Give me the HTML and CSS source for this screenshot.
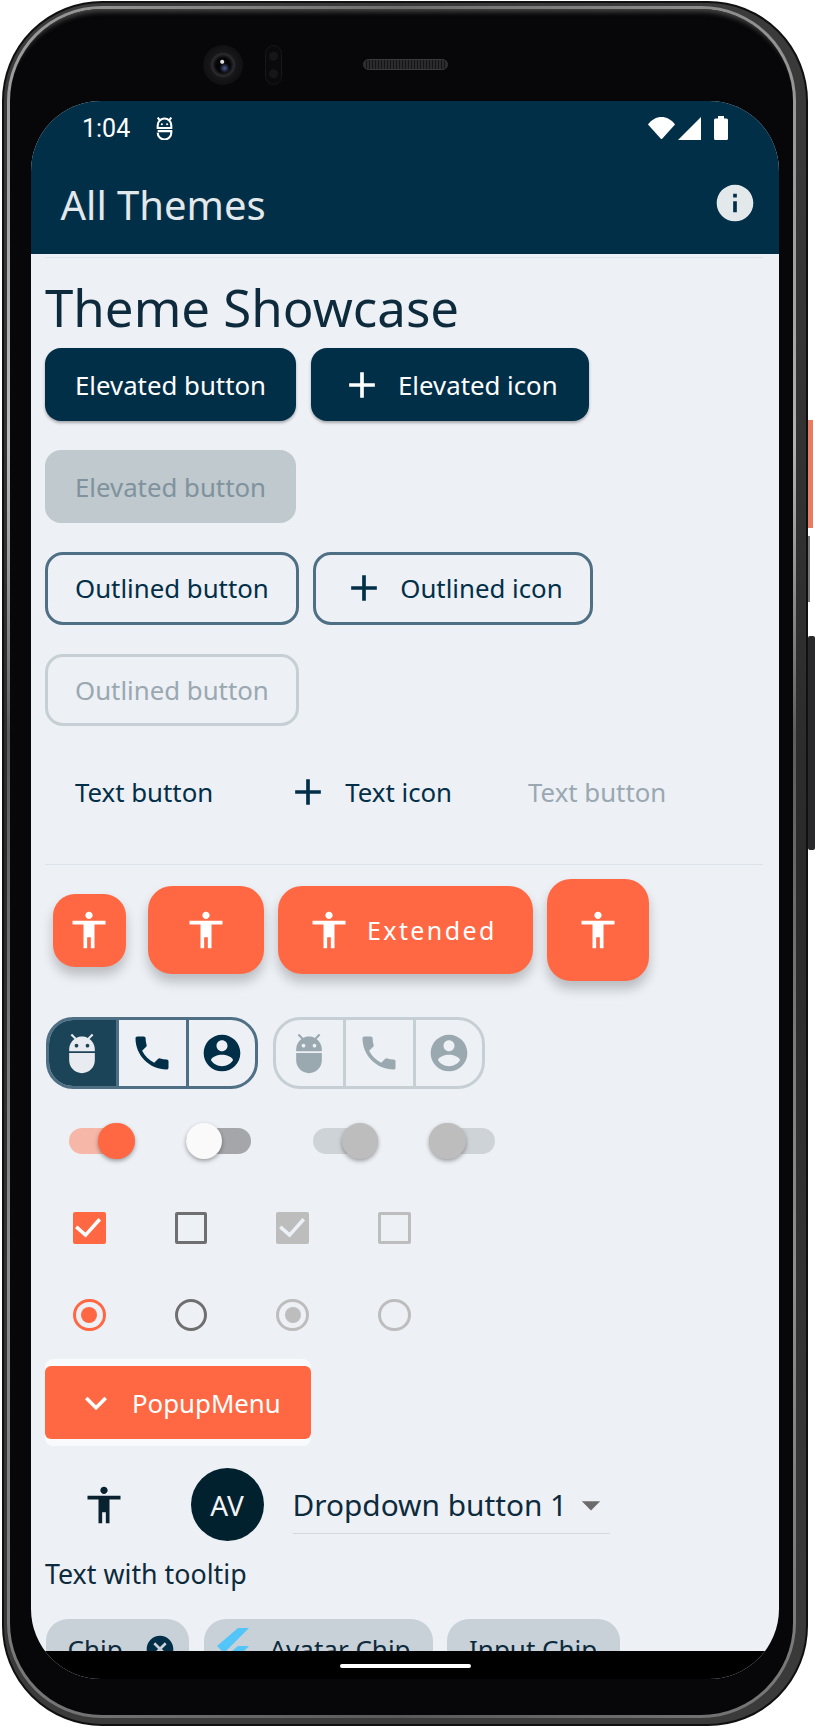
FILE: index.html
```html
<!DOCTYPE html>
<html lang="en">
<head>
    <meta charset="UTF-8">
    <meta name="viewport" content="width=device-width, initial-scale=1.0">
    <title>All Themes</title>
    <link rel="stylesheet" href="styles.css">
</head>
<body>
    <svg class="sprite">
        <symbol id="i-person" viewBox="0 0 24 24"><path d="M12 2c1.1 0 2 .9 2 2s-.9 2-2 2-2-.9-2-2 .9-2 2-2zm9 7h-6v13h-2v-6h-2v6H9V9H3V7h18v2z"/></symbol>
        <symbol id="i-add" viewBox="0 0 24 24"><path d="M19 13h-6v6h-2v-6H5v-2h6V5h2v6h6v2z"/></symbol>
        <symbol id="i-adb" viewBox="0 0 24 24"><path d="M5 16c0 3.87 3.13 7 7 7s7-3.13 7-7v-4H5v4zM16.12 4.37l2.1-2.1-.82-.83-2.3 2.31C14.16 3.28 13.12 3 12 3s-2.16.28-3.09.75L6.6 1.44l-.82.83 2.1 2.1C6.14 5.64 5 7.68 5 10v1h14v-1c0-2.32-1.14-4.36-2.88-5.63zM9 9c-.55 0-1-.45-1-1s.45-1 1-1 1 .45 1 1-.45 1-1 1zm6 0c-.55 0-1-.45-1-1s.45-1 1-1 1 .45 1 1-.45 1-1 1z"/></symbol>
        <symbol id="i-phone" viewBox="0 0 24 24"><path d="M6.62 10.79c1.44 2.83 3.76 5.14 6.59 6.59l2.2-2.2c.27-.27.67-.36 1.02-.24 1.12.37 2.33.57 3.57.57.55 0 1 .45 1 1V20c0 .55-.45 1-1 1-9.39 0-17-7.61-17-17 0-.55.45-1 1-1h3.5c.55 0 1 .45 1 1 0 1.25.2 2.45.57 3.57.11.35.03.74-.25 1.02l-2.2 2.2z"/></symbol>
        <symbol id="i-account" viewBox="0 0 24 24"><path d="M12 2C6.48 2 2 6.48 2 12s4.48 10 10 10 10-4.48 10-10S17.52 2 12 2zm0 3c1.66 0 3 1.34 3 3s-1.34 3-3 3-3-1.34-3-3 1.34-3 3-3zm0 14.2c-2.5 0-4.71-1.28-6-3.22.03-1.99 4-3.08 6-3.08 1.99 0 5.97 1.09 6 3.08-1.29 1.94-3.5 3.22-6 3.22z"/></symbol>
        <symbol id="i-check" viewBox="0 0 33 33"><path d="M4.3 16l9.4 8.3L28 8.3" fill="none" stroke="currentColor" stroke-width="3.6"/></symbol>
    </svg>

    <div class="phone">
        <div class="rim">
            <div class="bezel">
                <div class="sensors">
                    <div class="camera"></div>
                    <div class="prox"></div>
                    <div class="speaker"></div>
                </div>
                <div class="screen">
                    <div class="status-bar">
                        <span class="clock">1:04</span>
                        <svg class="status-adb" viewBox="0 0 16 22" fill="none" stroke="#fff" stroke-width="2">
                            <path d="M1.5 10.5V8a6.5 6.5 0 0 1 13 0v2.5zM3 2.5L1.5.5M13 2.5L14.5.5"/>
                            <path d="M1.5 13.5h13V15a6.5 6.5 0 0 1-13 0"/>
                            <circle cx="5.5" cy="7" r="1" fill="#fff" stroke="none"/>
                            <circle cx="10.5" cy="7" r="1" fill="#fff" stroke="none"/>
                        </svg>
                        <div class="status-right">
                            <svg class="st-wifi" viewBox="0 0 27 22.5"><path d="M0 7.5C7-2.5 20-2.5 27 7.5L13.5 22.5z" fill="#fff"/></svg>
                            <svg class="st-signal" viewBox="0 0 23 23"><path d="M0 23L23 0v23z" fill="#fff"/></svg>
                            <svg class="st-battery" viewBox="0 0 14 24"><path d="M4 0h6v2.5h2.5A1.5 1.5 0 0 1 14 4v18.5a1.5 1.5 0 0 1-1.5 1.5h-11A1.5 1.5 0 0 1 0 22.500V4a1.500 1.500 0 0 1 1.500-1.500H4z" fill="#fff"/></svg>
                        </div>
                    </div>
                    <div class="app-bar">
                        <h1>All Themes</h1>
                        <svg class="icon info-icon" viewBox="0 0 24 24"><path d="M12 2C6.48 2 2 6.48 2 12s4.48 10 10 10 10-4.48 10-10S17.52 2 12 2zm1 15h-2v-6h2v6zm0-8h-2V7h2v2z"/></svg>
                    </div>

                    <div class="content">
                        <div class="top-line"></div>
                        <h2 class="title">Theme Showcase</h2>

                        <div class="row row-first">
                            <button class="btn elevated">Elevated button</button>
                            <button class="btn elevated with-icon"><svg class="icon"><use href="#i-add"/></svg>Elevated icon</button>
                        </div>
                        <div class="row row-next">
                            <button class="btn elevated off">Elevated button</button>
                        </div>
                        <div class="row row-next row-outlined">
                            <button class="btn outlined">Outlined button</button>
                            <button class="btn outlined with-icon"><svg class="icon"><use href="#i-add"/></svg>Outlined icon</button>
                        </div>
                        <div class="row row-next">
                            <button class="btn outlined off">Outlined button</button>
                        </div>
                        <div class="row row-text">
                            <button class="btn flat">Text button</button>
                            <button class="btn flat with-icon"><svg class="icon"><use href="#i-add"/></svg>Text icon</button>
                            <button class="btn flat off">Text button</button>
                        </div>

                        <div class="divider"></div>

                        <div class="row row-fabs">
                            <div class="fab fab-small"><svg class="icon"><use href="#i-person"/></svg></div>
                            <div class="fab fab-regular"><svg class="icon"><use href="#i-person"/></svg></div>
                            <div class="fab fab-extended"><svg class="icon"><use href="#i-person"/></svg>Extended</div>
                            <div class="fab fab-large"><svg class="icon"><use href="#i-person"/></svg></div>
                        </div>

                        <div class="row row-toggles">
                            <div class="toggles">
                                <div class="toggle selected"><svg class="icon"><use href="#i-adb"/></svg></div>
                                <div class="toggle"><svg class="icon"><use href="#i-phone"/></svg></div>
                                <div class="toggle"><svg class="icon"><use href="#i-account"/></svg></div>
                            </div>
                            <div class="toggles off">
                                <div class="toggle"><svg class="icon"><use href="#i-adb"/></svg></div>
                                <div class="toggle"><svg class="icon"><use href="#i-phone"/></svg></div>
                                <div class="toggle"><svg class="icon"><use href="#i-account"/></svg></div>
                            </div>
                        </div>

                        <div class="row row-switches">
                            <div class="switch on"><span class="thumb"></span></div>
                            <div class="switch"><span class="thumb"></span></div>
                            <div class="switch on off"><span class="thumb"></span></div>
                            <div class="switch off"><span class="thumb"></span></div>
                        </div>

                        <div class="row row-checks">
                            <div class="check on"><svg><use href="#i-check"/></svg></div>
                            <div class="check"></div>
                            <div class="check on off"><svg><use href="#i-check"/></svg></div>
                            <div class="check off"></div>
                        </div>

                        <div class="row row-radios">
                            <div class="radio on"></div>
                            <div class="radio"></div>
                            <div class="radio on off"></div>
                            <div class="radio off"></div>
                        </div>

                        <div class="popup-wrap">
                            <div class="popup">
                                <svg class="icon" viewBox="0 0 24 24"><path d="M16.59 8.59L12 13.17 7.41 8.59 6 10l6 6 6-6z"/></svg>
                                PopupMenu
                            </div>
                        </div>

                        <div class="row row-avatar">
                            <svg class="icon person-dark"><use href="#i-person"/></svg>
                            <div class="avatar">AV</div>
                            <div class="dropdown">
                                <span>Dropdown button 1</span>
                                <svg class="icon" viewBox="0 0 24 24"><path d="M7 10l5 5 5-5z"/></svg>
                            </div>
                        </div>

                        <p class="tooltip-text">Text with tooltip</p>

                        <div class="row row-chips">
                            <div class="chip chip-delete">Chip
                                <svg class="icon" viewBox="0 0 24 24"><path d="M12 2C6.47 2 2 6.47 2 12s4.47 10 10 10 10-4.47 10-10S17.53 2 12 2zm5 13.59L15.59 17 12 13.41 8.41 17 7 15.59 10.59 12 7 8.41 8.41 7 12 10.59 15.59 7 17 8.41 13.41 12 17 15.59z"/></svg>
                            </div>
                            <div class="chip chip-avatar">
                                <svg class="flutter" viewBox="0 0 32 40"><path d="M21 0h11L7 25l-7-7zM21 18h11L21 29l-6-6z" fill="#54c5f8"/></svg>
                                Avatar Chip
                            </div>
                            <div class="chip chip-input">Input Chip</div>
                        </div>
                    </div>

                    <div class="nav-bar"><span class="home-pill"></span></div>
                </div>
            </div>
        </div>

        <div class="side-power"></div>
        <div class="side-line"></div>
        <div class="side-volume"></div>
    </div>
</body>
</html>
```

FILE: styles.css
```css
*{
    margin: 0;
    padding: 0;
    box-sizing: border-box;
}

body{
    background-color: #fff;
    font-family: "Noto Sans", Arial, sans-serif;
    color: #0d2b3c;
    width: 815px;
    height: 1727px;
    overflow: hidden;
}

.sprite{
    display: none;
}

.icon{
    width: 44px;
    height: 44px;
    fill: currentColor;
    flex-shrink: 0;
}

/* ---------- phone frame ---------- */

.phone{
    position: relative;
    width: 806px;
    height: 1725px;
    margin: 1px 0 0 2px;
    padding: 3px 10px 6px 3px;
    border: 2px solid #101011;
    border-radius: 100px;
    background: linear-gradient(#3b3b3c, #2a2a2b 50%, #3b3b3c);
}

.rim{
    height: 100%;
    padding: 3px;
    border-radius: 95px;
    background: conic-gradient(#6e6e6e, #b0b0b0 12%, #5c5c5c 20%, #747474 30%, #8e8e8e 38%, #5a5a5a 50%, #8e8e8e 62%, #747474 70%, #5c5c5c 80%, #bcbcbc 88%, #6e6e6e);
}

.bezel{
    height: 100%;
    padding-left: 21px;
    padding-right: 14px;
    border-radius: 92px;
    background-color: #070709;
    box-shadow: inset 0 9px 5px -6px #444;
}

.sensors{
    height: 92px;
    display: flex;
    align-items: flex-start;
    padding: 36px 0 0 172px;
}

.camera{
    width: 40px;
    height: 40px;
    border-radius: 50%;
    background:
        radial-gradient(circle at 48% 42%, #ddd 0, #ddd 1.5px, transparent 2.5px),
        radial-gradient(circle at 54% 58%, #46588c 0, transparent 5px),
        radial-gradient(circle, #050507 0, #050507 7px, #2c2c30 11px, #17171a 13px, #101012 20px);
}

.prox{
    width: 17px;
    height: 40px;
    margin-left: 22px;
    border-radius: 9px;
    border: 1px solid #17171a;
    background:
        radial-gradient(circle at 50% 27%, #15151a 0, #15151a 4px, transparent 5px),
        radial-gradient(circle at 50% 73%, #15151a 0, #15151a 4px, transparent 5px),
        #0a0a0c;
}

.speaker{
    width: 85px;
    height: 11px;
    margin: 14px 0 0 81px;
    border-radius: 6px;
    border: 1px solid #3a3a3c;
    background: repeating-linear-gradient(90deg, #2b2b2e 0, #2b2b2e 2px, #161618 2px, #161618 3px);
}

.side-power{
    position: absolute;
    left: 804px;
    top: 417px;
    width: 5px;
    height: 108px;
    background-color: #e77c62;
}

.side-line{
    position: absolute;
    left: 804px;
    top: 533px;
    width: 2px;
    height: 66px;
    background-color: #777;
}

.side-volume{
    position: absolute;
    left: 804px;
    top: 633px;
    width: 7px;
    height: 214px;
    border-radius: 2px;
    background-color: #29292b;
}

/* ---------- screen ---------- */

.screen{
    width: 748px;
    height: 1578px;
    border-radius: 70px;
    overflow: hidden;
    background-color: #edf0f5;
    display: flex;
    flex-direction: column;
}

.status-bar{
    height: 54px;
    background-color: #022f48;
    color: #fff;
    display: flex;
    align-items: center;
    padding: 0 51px 0 51px;
}

.clock{
    font-family: Roboto, sans-serif;
    font-size: 25px;
}

.status-adb{
    width: 17px;
    height: 23px;
    margin-left: 26px;
}

.status-right{
    margin-left: auto;
    display: flex;
    align-items: center;
}

.st-wifi{
    width: 27px;
    height: 22.5px;
}

.st-signal{
    width: 23px;
    height: 23px;
    margin-left: 3px;
}

.st-battery{
    width: 14px;
    height: 24px;
    margin-left: 13px;
}

.app-bar{
    height: 99px;
    background-color: #022f48;
    color: #e3e8eb;
    display: flex;
    align-items: center;
    justify-content: space-between;
    padding: 0 22px 0 29.5px;
}

.app-bar h1{
    font-size: 40px;
    font-weight: 400;
}

.info-icon{
    margin-bottom: 4px;
}

.content{
    flex: 1;
    overflow: hidden;
    padding: 0 16px 0 14px;
}

.top-line{
    height: 1px;
    margin-top: 2.5px;
    background-color: #dfe3ea;
}

.title{
    margin-top: 15.5px;
    line-height: 68px;
    font-size: 51px;
    font-weight: 400;
}

.row{
    display: flex;
}

.row-first{
    margin-top: 7px;
    gap: 15px;
}

.row-next{
    margin-top: 29px;
    gap: 14px;
}

.row-text{
    margin-top: 29px;
    gap: 16px;
}

/* ---------- buttons ---------- */

.btn{
    height: 73px;
    padding: 0 30px;
    border: 0;
    border-radius: 16px;
    background: none;
    font-family: inherit;
    font-size: 25.8px;
    color: inherit;
    display: flex;
    align-items: center;
    white-space: nowrap;
}

.btn.with-icon{
    padding-left: 27px;
    padding-right: 30px;
    gap: 15px;
}

.elevated{
    background-color: #022f48;
    color: #fff;
    box-shadow: 0 2px 3px rgba(0, 0, 0, 0.3);
}

.btn.elevated.with-icon{
    padding-left: 29px;
    padding-right: 31px;
    gap: 14px;
}

.elevated.off{
    background-color: #c0c9ce;
    color: #7f929d;
    box-shadow: none;
}

.btn.outlined{
    height: 72.5px;
    padding: 0 27.5px 0 27px;
    border: 3px solid #4f6f84;
    border-radius: 18px;
    color: #022f48;
}

.btn.outlined.with-icon{
    padding-left: 26px;
    gap: 14.5px;
}

.row-outlined{
    gap: 13.5px;
}

.btn.outlined.off{
    border-color: #c6cfd4;
    color: #9aa8b1;
}

.flat{
    color: #022f48;
}

.flat.off{
    color: #9aa8b1;
}

.divider{
    height: 1px;
    margin-top: 36px;
    background-color: #dde2e8;
}

/* ---------- fabs ---------- */

.row-fabs{
    margin-top: 14px;
    padding-left: 8px;
    align-items: center;
}

.fab{
    background-color: #ff6842;
    color: #fff;
    display: flex;
    align-items: center;
    justify-content: center;
    box-shadow: 0 8px 12px rgba(0, 0, 0, 0.22);
}

.fab-small{
    width: 72.5px;
    height: 73px;
    border-radius: 22px;
}

.fab-regular{
    width: 116.5px;
    height: 87.5px;
    margin-left: 22px;
    border-radius: 24px;
}

.fab-extended{
    height: 87.5px;
    margin-left: 14px;
    padding: 0 36px 0 29px;
    gap: 16px;
    border-radius: 24px;
    font-size: 25px;
    letter-spacing: 2.4px;
}

.fab-large{
    width: 102px;
    height: 102px;
    margin-left: 14px;
    border-radius: 24px;
}

/* ---------- toggle buttons ---------- */

.row-toggles{
    margin-top: 36px;
    padding-left: 0.5px;
    gap: 14.5px;
}

.toggles{
    height: 72px;
    display: flex;
    border: 3px solid #4f6f84;
    border-radius: 27px;
    overflow: hidden;
    color: #022f48;
}

.toggle{
    width: 69.5px;
    height: 100%;
    display: flex;
    align-items: center;
    justify-content: center;
    border-left: 3px solid #4f6f84;
}

.toggle:first-child{
    width: 67.5px;
    border-left: 0;
}

.toggle.selected{
    background-color: #1b4459;
    color: #e8ecf0;
}

.toggles.off{
    border-color: #c6cfd4;
    color: #9aa8b0;
}

.toggles.off .toggle{
    border-color: #c6cfd4;
}

/* ---------- switches, checkboxes, radios ---------- */

.row-switches{
    margin-top: 33.5px;
    padding-left: 24px;
    height: 36.5px;
    align-items: center;
}

.switch{
    width: 65.5px;
    height: 25.5px;
    margin-right: 51px;
    border-radius: 13px;
    background-color: #a4a6aa;
    display: flex;
    align-items: center;
}

.switch:nth-child(2){
    margin-right: 61.5px;
}

.thumb{
    width: 36.5px;
    height: 36.5px;
    flex-shrink: 0;
    border-radius: 50%;
    background-color: #fafafa;
    box-shadow: 0 2px 4px rgba(0, 0, 0, 0.35);
}

.switch.on{
    justify-content: flex-end;
    background-color: #f6b7a8;
}

.switch.on .thumb{
    background-color: #ff6842;
}

.switch.off{
    background-color: #ced3d7;
}

.switch.off .thumb{
    background-color: #bdbdbd;
}

.row-checks{
    margin-top: 52.5px;
    padding-left: 28px;
    gap: 69px;
}

.check{
    width: 32.7px;
    height: 32.7px;
    border-radius: 2px;
    border: 3.6px solid #6f6f6f;
    color: #fff;
    position: relative;
}

.check svg{
    position: absolute;
    left: -3.6px;
    top: -3.6px;
    width: 32.7px;
    height: 32.7px;
}

.check.on{
    background-color: #ff6842;
    border-color: #ff6842;
}

.check.off{
    border-color: #bdbdbd;
}

.check.on.off{
    background-color: #bdbdbd;
    color: #edf0f5;
}

.row-radios{
    margin-top: 54.5px;
    padding-left: 28px;
    gap: 69px;
}

.radio{
    width: 32.7px;
    height: 32.7px;
    border-radius: 50%;
    border: 3.6px solid #6f6f6f;
    display: flex;
    align-items: center;
    justify-content: center;
}

.radio.on{
    border-color: #ff6842;
}

.radio.on::after{
    content: "";
    width: 16px;
    height: 16px;
    border-radius: 50%;
    background-color: #ff6842;
}

.radio.off{
    border-color: #bdbdbd;
}

.radio.on.off::after{
    background-color: #bdbdbd;
}

/* ---------- popup, avatar row, chips ---------- */

.popup-wrap{
    width: 265.5px;
    margin-top: 28px;
    padding: 7px 0;
    border-radius: 8px;
    background-color: #f9fafc;
}

.popup{
    height: 73px;
    padding-left: 29px;
    border-radius: 6px;
    background-color: #ff6842;
    color: #fff;
    display: flex;
    align-items: center;
    gap: 14px;
    font-size: 25.8px;
}

.row-avatar{
    margin-top: 22px;
    padding-left: 36.5px;
    align-items: flex-start;
}

.person-dark{
    margin-top: 14.5px;
    color: #0a2230;
}

.avatar{
    width: 73px;
    height: 73px;
    margin-left: 65px;
    border-radius: 50%;
    background-color: #02212f;
    color: #f2f4f7;
    display: flex;
    align-items: center;
    justify-content: center;
    font-size: 28px;
}

.dropdown{
    width: 317px;
    height: 66px;
    margin-left: 29px;
    padding-top: 8px;
    border-bottom: 1.5px solid #d3d8dc;
    display: flex;
    align-items: center;
    font-size: 29.8px;
    color: #0d2b3c;
}

.dropdown span{
    white-space: nowrap;
    flex-shrink: 0;
}

.dropdown .icon{
    color: #6b6b6b;
    margin-left: 2px;
}

.tooltip-text{
    margin-top: 16px;
    line-height: 34px;
    font-size: 26.8px;
}

.row-chips{
    margin-top: 28px;
    padding-left: 0.5px;
    gap: 14.5px;
}

.chip{
    height: 60px;
    border-radius: 22px;
    background-color: #c8d0d8;
    display: flex;
    align-items: center;
    font-size: 26px;
    flex-shrink: 0;
}

.chip-delete{
    width: 143.5px;
    padding-left: 22px;
}

.chip-delete .icon{
    width: 32px;
    height: 32px;
    margin-left: auto;
    margin-right: 13px;
    color: #022f48;
}

.chip-avatar{
    width: 229px;
    padding-left: 13px;
    gap: 21px;
}

.flutter{
    width: 32px;
    height: 40px;
    margin-bottom: 2px;
}

.chip-input{
    width: 173px;
    padding-left: 22px;
}

.nav-bar{
    height: 28px;
    flex-shrink: 0;
    background-color: #000;
    display: flex;
    justify-content: center;
    padding-top: 13px;
}

.home-pill{
    width: 131px;
    height: 4px;
    border-radius: 2px;
    background-color: #fff;
}
```
